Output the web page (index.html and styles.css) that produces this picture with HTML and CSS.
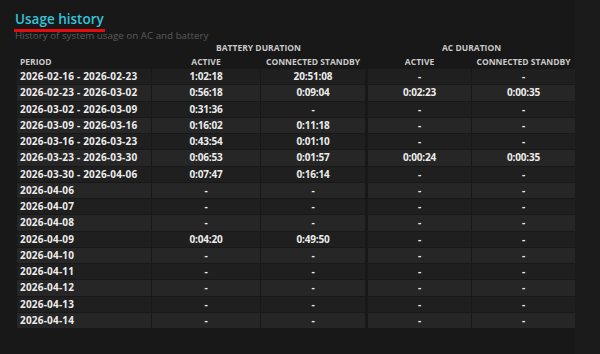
FILE: index.html
```html
<!DOCTYPE html>
<html lang="en">
<head>
<meta charset="utf-8">
<link rel="stylesheet" href="styles.css">
</head>
<body>
<div class="page">
  <header class="head">
    <h1 class="title">Usage history</h1>
    <p class="subtitle">History of system usage on AC and battery</p>
  </header>
  <table class="usage">
    <colgroup>
      <col class="c-period"><col class="c-act"><col class="c-cs"><col class="c-act2"><col class="c-cs2">
    </colgroup>
    <thead>
      <tr class="group">
        <th></th>
        <th colspan="2">BATTERY DURATION</th>
        <th colspan="2" class="sep">AC DURATION</th>
      </tr>
      <tr class="cols">
        <th class="left">PERIOD</th>
        <th>ACTIVE</th>
        <th>CONNECTED STANDBY</th>
        <th class="sep">ACTIVE</th>
        <th>CONNECTED STANDBY</th>
      </tr>
    </thead>
    <tbody>
      <tr><td>2026-02-16 - 2026-02-23</td><td>1:02:18</td><td>20:51:08</td><td class="sep">-</td><td>-</td></tr>
      <tr><td>2026-02-23 - 2026-03-02</td><td>0:56:18</td><td>0:09:04</td><td class="sep">0:02:23</td><td>0:00:35</td></tr>
      <tr><td>2026-03-02 - 2026-03-09</td><td>0:31:36</td><td>-</td><td class="sep">-</td><td>-</td></tr>
      <tr><td>2026-03-09 - 2026-03-16</td><td>0:16:02</td><td>0:11:18</td><td class="sep">-</td><td>-</td></tr>
      <tr><td>2026-03-16 - 2026-03-23</td><td>0:43:54</td><td>0:01:10</td><td class="sep">-</td><td>-</td></tr>
      <tr><td>2026-03-23 - 2026-03-30</td><td>0:06:53</td><td>0:01:57</td><td class="sep">0:00:24</td><td>0:00:35</td></tr>
      <tr><td>2026-03-30 - 2026-04-06</td><td>0:07:47</td><td>0:16:14</td><td class="sep">-</td><td>-</td></tr>
      <tr><td>2026-04-06</td><td>-</td><td>-</td><td class="sep">-</td><td>-</td></tr>
      <tr><td>2026-04-07</td><td>-</td><td>-</td><td class="sep">-</td><td>-</td></tr>
      <tr><td>2026-04-08</td><td>-</td><td>-</td><td class="sep">-</td><td>-</td></tr>
      <tr><td>2026-04-09</td><td>0:04:20</td><td>0:49:50</td><td class="sep">-</td><td>-</td></tr>
      <tr><td>2026-04-10</td><td>-</td><td>-</td><td class="sep">-</td><td>-</td></tr>
      <tr><td>2026-04-11</td><td>-</td><td>-</td><td class="sep">-</td><td>-</td></tr>
      <tr><td>2026-04-12</td><td>-</td><td>-</td><td class="sep">-</td><td>-</td></tr>
      <tr><td>2026-04-13</td><td>-</td><td>-</td><td class="sep">-</td><td>-</td></tr>
      <tr><td>2026-04-14</td><td>-</td><td>-</td><td class="sep">-</td><td>-</td></tr>
    </tbody>
  </table>
</div>
</body>
</html>
```

FILE: styles.css
```css
html, body {
  margin: 0;
  padding: 0;
  background: #181818;
}
body {
  font-family: "Open Sans", "Noto Sans", sans-serif;
  color: #e6e6e6;
}
.page {
  width: 575px;
  height: 354px;
  padding: 7px 0 0 0;
  box-sizing: border-box;
  background: #181818;
  box-shadow: 25px 0 0 #1b1b1b;
}
.head {
  padding-left: 15px;
  height: 34px;
}
.title {
  margin: 0;
  font-size: 13.5px;
  font-weight: 600;
  line-height: 20px;
  height: 20px;
  color: #2ec5d6;
  display: inline-block;
  border-bottom: 3px solid #e30c0c;
  padding: 0 1px 0 1px;
  margin-left: -1px;
}
.subtitle {
  margin: -3.5px 0 0 0;
  font-size: 9.8px;
  line-height: 13px;
  color: #5b5b5b;
}
.usage {
  margin-left: 16px;
  width: 560px;
  table-layout: fixed;
  border-collapse: separate;
  border-spacing: 1px;
  font-size: 10px;
  font-weight: 700;
  letter-spacing: -0.15px;
}
.c-period { width: 134px; }
.c-act { width: 108px; }
.c-cs { width: 104px; }
.c-act2 { width: 105px; }
.c-cs2 { width: 103px; }
th {
  font-size: 8.5px;
  font-weight: 700;
  letter-spacing: 0;
  color: #c9c9c9;
  text-align: center;
  padding: 0;
  height: 13px;
  line-height: 13px;
  white-space: nowrap;
}
th.left { text-align: left; padding-left: 3px; }
.group th { height: 12px; line-height: 12px; }
td {
  padding: 0;
  height: 15.25px;
  line-height: 15px;
  text-align: center;
  white-space: nowrap;
  color: #ececec;
}
td:first-child {
  text-align: left;
  padding-left: 3px;
  letter-spacing: 0.2px;
}
tbody tr:nth-child(odd) td { background: #1f1f1f; }
tbody tr:nth-child(even) td { background: #262626; }
td.sep { border-left: 2px solid #181818; }
th.sep { border-left: 2px solid transparent; }
```
